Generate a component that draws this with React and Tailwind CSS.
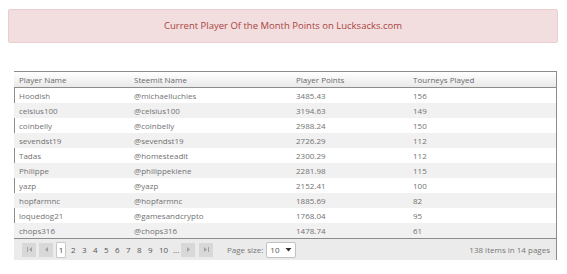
import React from 'react';

const players = [
  ['Hoodish', '@michaelluchies', '3485.43', '156'],
  ['celsius100', '@celsius100', '3194.63', '149'],
  ['coinbelly', '@coinbelly', '2988.24', '150'],
  ['sevendst19', '@sevendst19', '2726.29', '112'],
  ['Tadas', '@homesteadlt', '2300.29', '112'],
  ['Philippe', '@philippekiene', '2281.98', '115'],
  ['yazp', '@yazp', '2152.41', '100'],
  ['hopfarmnc', '@hopfarmnc', '1885.69', '82'],
  ['loquedog21', '@gamesandcrypto', '1768.04', '95'],
  ['chops316', '@chops316', '1478.74', '61'],
];

const cols = 'grid grid-cols-[120px_162px_117px_1fr]';

const NavButton = ({ children }) => (
  <div className="w-[14px] h-[14px] bg-[#d8d8d8] flex items-center justify-center">
    {children}
  </div>
);

const App = () => {
  return (
    <div className="w-[567px] h-[274px] bg-white font-['Open_Sans',sans-serif] text-[#727272] pt-[9px]">
      <div className="mx-[8px] w-[550px] h-[34px] bg-[#f2dede] border border-[#ebccd1] rounded-[2px] flex items-center justify-center text-[#a94442] text-[9.5px]">
        Current Player Of the Month Points on Lucksacks.com
      </div>

      <div className="ml-[14px] w-[543px] mt-[28px] border-t border-r border-[#8c8c8c]">
        <div className={`${cols} h-[16px] items-center bg-gradient-to-b from-white to-[#e9e9e9] border-b border-[#8c8c8c] text-[8px] text-[#6a6a6a]`}>
          <div className="pl-[5px]">Player Name</div>
          <div>Steemit Name</div>
          <div>Player Points</div>
          <div>Tourneys Played</div>
        </div>
        {players.map((p, i) => (
          <div
            key={p[0]}
            className={`${cols} h-[15px] items-center text-[8px] ${i % 2 ? 'bg-[#f1f1f1]' : 'bg-white border-l border-[#8c8c8c]'}`}
          >
            <div className={i % 2 ? 'pl-[5px]' : 'pl-[4px]'}>{p[0]}</div>
            <div className={i % 2 ? '' : '-ml-[1px]'}>{p[1]}</div>
            <div className={i % 2 ? '' : '-ml-[1px]'}>{p[2]}</div>
            <div className={i % 2 ? '' : '-ml-[1px]'}>{p[3]}</div>
          </div>
        ))}
        <div className="h-[22px] bg-[#ebebeb] border-t border-[#8c8c8c] flex items-center text-[8px] text-[#777] pr-[6px]">
          <div className="flex items-center pl-[8px] gap-[3px]">
            <NavButton>
              <svg width="7" height="7" viewBox="0 0 7 7"><rect x="1" y="1" width="1" height="5" fill="#a0a0a0" /><path d="M6 1 L3 3.5 L6 6 Z" fill="#a0a0a0" /></svg>
            </NavButton>
            <NavButton>
              <svg width="7" height="7" viewBox="0 0 7 7"><path d="M5 1 L2 3.5 L5 6 Z" fill="#a0a0a0" /></svg>
            </NavButton>
          </div>
          <div className="flex items-center ml-[3px]">
            <div className="h-[16px] w-[10px] bg-white border border-[#c8c8c8] rounded-[1px] flex items-center justify-center text-[#444] mr-[5px]">1</div>
            {['2', '3', '4', '5', '6', '7', '8', '9'].map((n) => (
              <span key={n} className="w-[11px] text-[#555]">{n}</span>
            ))}
            <span className="w-[14px] text-[#555]">10</span>
            <span className="w-[8px] text-[#555]">...</span>
          </div>
          <div className="flex items-center gap-[4px]">
            <NavButton>
              <svg width="7" height="7" viewBox="0 0 7 7"><path d="M2 1 L5 3.5 L2 6 Z" fill="#a0a0a0" /></svg>
            </NavButton>
            <NavButton>
              <svg width="7" height="7" viewBox="0 0 7 7"><path d="M1 1 L4 3.5 L1 6 Z" fill="#a0a0a0" /><rect x="5" y="1" width="1" height="5" fill="#a0a0a0" /></svg>
            </NavButton>
          </div>
          <span className="ml-[14px] text-[#777]">Page size:</span>
          <div className="ml-[3px] w-[30px] h-[16px] bg-white border border-[#c2c2c2] rounded-[2px] flex items-center justify-between pl-[3px] pr-[3px] text-[#555]">
            <span>10</span>
            <svg width="7" height="5" viewBox="0 0 7 5"><path d="M0.5 1 L6.5 1 L3.5 4.5 Z" fill="#333" /></svg>
          </div>
          <span className="ml-auto text-[#777]">138 items in 14 pages</span>
        </div>
      </div>
    </div>
  );
};

export default App;
